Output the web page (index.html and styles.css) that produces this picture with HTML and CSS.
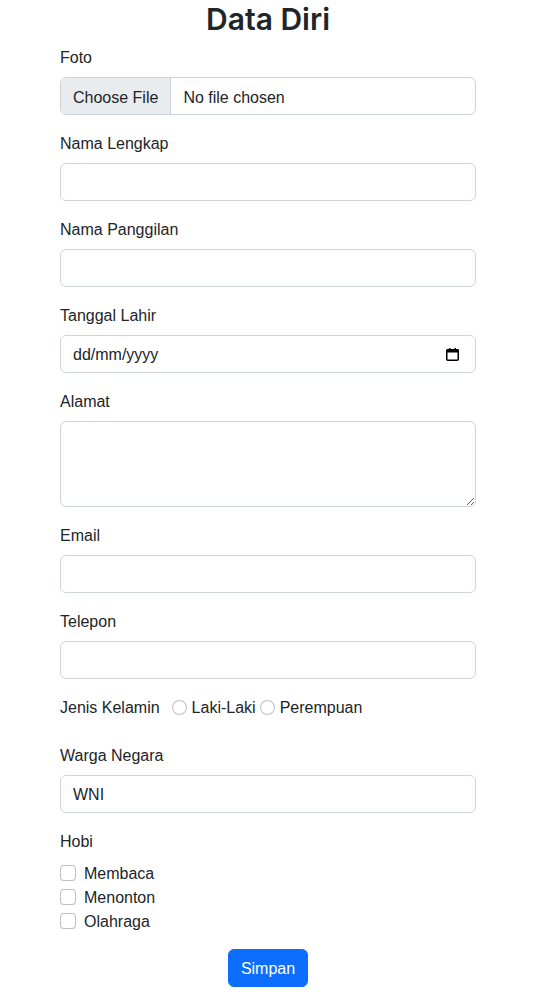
FILE: index.html
```html
<!DOCTYPE html>
<html lang="id">
<head>
<meta charset="utf-8">
<title>Data Diri</title>
<link rel="stylesheet" href="styles.css">
</head>
<body>
<main class="page">
  <h1 class="title">Data Diri</h1>
  <form class="form">
    <div class="group">
      <label class="label">Foto</label>
      <input class="control file" type="file">
    </div>
    <div class="group">
      <label class="label">Nama Lengkap</label>
      <input class="control" type="text">
    </div>
    <div class="group">
      <label class="label">Nama Panggilan</label>
      <input class="control" type="text">
    </div>
    <div class="group">
      <label class="label">Tanggal Lahir</label>
      <div class="control date">
        <span>dd/mm/yyyy</span>
        <svg class="cal" width="13" height="13" viewBox="0 0 13 13"><rect x="0.75" y="1.75" width="11.5" height="10.5" rx="1" fill="none" stroke="#000" stroke-width="1.5"/><rect x="0.5" y="1.5" width="12" height="3" fill="#000"/><rect x="3" y="0" width="1.5" height="2" fill="#000"/><rect x="8.5" y="0" width="1.5" height="2" fill="#000"/></svg>
      </div>
    </div>
    <div class="group">
      <label class="label">Alamat</label>
      <textarea class="control area" rows="3"></textarea>
    </div>
    <div class="group">
      <label class="label">Email</label>
      <input class="control" type="email">
    </div>
    <div class="group">
      <label class="label">Telepon</label>
      <input class="control" type="text">
    </div>
    <div class="group radios">
      <span class="radio-title">Jenis Kelamin</span>
      <label class="radio"><input type="radio" name="jk" class="check round"><span>Laki-Laki</span></label>
      <label class="radio"><input type="radio" name="jk" class="check round"><span>Perempuan</span></label>
    </div>
    <div class="group">
      <label class="label">Warga Negara</label>
      <input class="control" type="text" value="WNI">
    </div>
    <div class="group">
      <label class="label">Hobi</label>
      <label class="checkrow"><input type="checkbox" class="check"><span>Membaca</span></label>
      <label class="checkrow"><input type="checkbox" class="check"><span>Menonton</span></label>
      <label class="checkrow"><input type="checkbox" class="check"><span>Olahraga</span></label>
    </div>
    <div class="actions">
      <button type="button" class="btn">Simpan</button>
    </div>
  </form>
</main>
</body>
</html>
```
FILE: styles.css
```css
* { box-sizing: border-box; }
html, body { margin: 0; padding: 0; background: #fff; }
body {
  font-family: "Liberation Sans", Arial, sans-serif;
  font-size: 16px;
  line-height: 24px;
  color: #212529;
}
.page {
  width: 416px;
  margin-left: 60px;
}
.title {
  margin: 0 0 8px;
  padding-top: 1px;
  height: 37px;
  font-family: Inter, "Liberation Sans", sans-serif;
  font-size: 30px;
  line-height: 36px;
  font-weight: 600;
  text-align: center;
}
.form { display: flex; flex-direction: column; }
.group { display: flex; flex-direction: column; margin-bottom: 16px; }
.label { display: block; height: 24px; padding-top: 1px; line-height: 24px; margin-bottom: 8px; }
.control {
  display: block;
  width: 100%;
  height: 38px;
  padding: 7px 12px 5px;
  font: inherit;
  color: #212529;
  background: #fff;
  border: 1px solid #ced4da;
  border-radius: 6px;
  outline: none;
}
.file { overflow: hidden; }
.file::file-selector-button {
  padding: 7px 12px 5px;
  margin: -7px 12px -5px -12px;
  height: 38px;
  font: inherit;
  color: #212529;
  background: #e9ecef;
  border: 0;
  border-right: 1px solid #ced4da;
  border-radius: 0;
}
.date {
  display: flex;
  align-items: center;
  justify-content: space-between;
  padding-right: 16px;
}
.cal { margin-top: -2px; }
.area { height: 86px; resize: vertical; }
.radios {
  flex-direction: row;
  align-items: center;
  height: 24px;
  margin-bottom: 24px;
  padding-top: 1px;
}
.radio-title { margin-right: 12px; }
.radio { display: flex; align-items: center; margin-right: 4px; }
.check {
  appearance: none;
  -webkit-appearance: none;
  width: 16px;
  height: 16px;
  margin: 0;
  border: 1px solid rgba(0,0,0,.25);
  border-radius: 4px;
  background: #fff;
  flex: none;
}
.round { border-radius: 50%; width: 15px; height: 15px; margin-right: 5px; }
.checkrow { display: flex; align-items: center; height: 24px; }
.checkrow span { padding-top: 1px; }
.checkrow .check { margin-right: 8px; }
.actions { display: flex; justify-content: center; }
.btn {
  height: 38px;
  padding: 7px 12px 5px;
  font: inherit;
  color: #fff;
  background: #0d6efd;
  border: 1px solid #0d6efd;
  border-radius: 6px;
}
```
